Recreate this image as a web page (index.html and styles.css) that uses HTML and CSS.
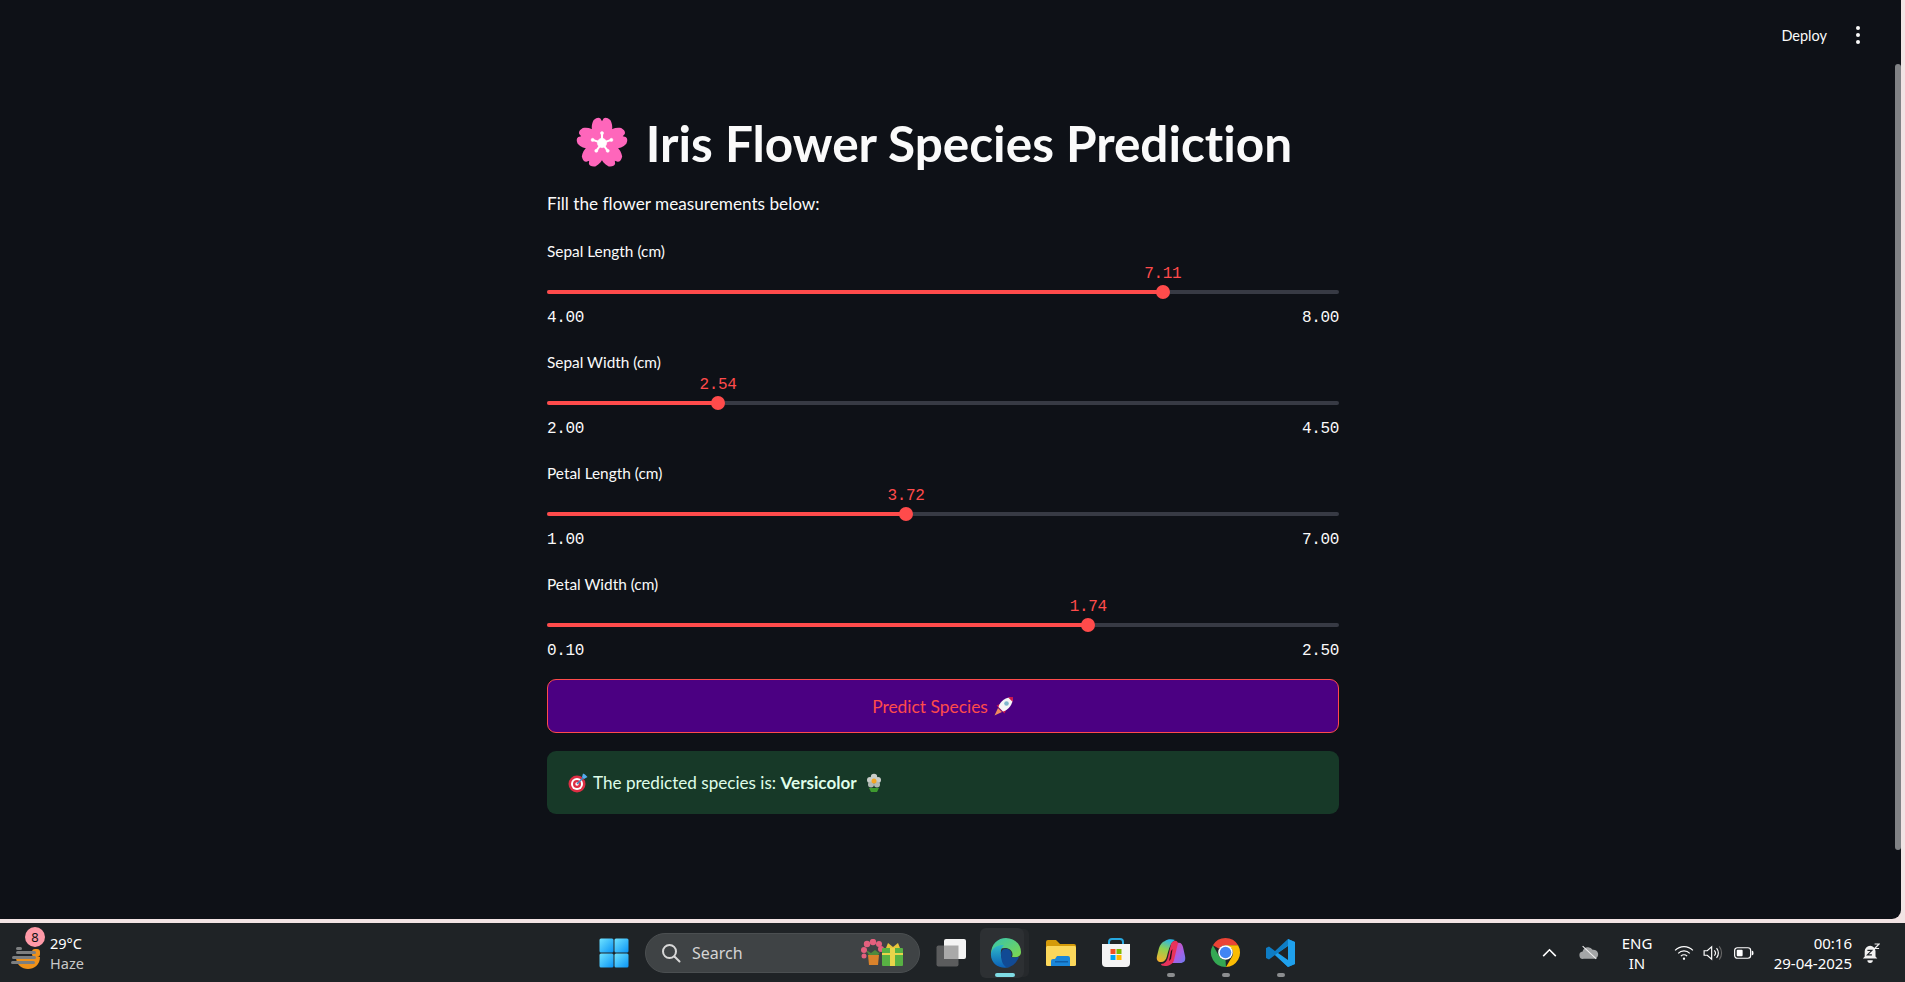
FILE: index.html
```html
<!DOCTYPE html>
<html lang="en">
<head>
    <meta charset="UTF-8">
    <title>Iris Flower Species Prediction</title>
    <meta name="viewport" content="width=device-width, initial-scale=1">
    <link rel="stylesheet" href="styles.css">
</head>
<body>

<svg class="defs" aria-hidden="true">
    <defs>
        <linearGradient id="winBlue" x1="0" y1="0" x2="1" y2="1">
            <stop offset="0" stop-color="#6fe3ff"/>
            <stop offset="1" stop-color="#0a94f5"/>
        </linearGradient>
        <linearGradient id="edgeBlue" x1="0" y1="0" x2="0" y2="1">
            <stop offset="0" stop-color="#2fb9c8"/>
            <stop offset="1" stop-color="#0b5fb8"/>
        </linearGradient>
        <linearGradient id="edgeGreen" x1="0" y1="0" x2="1" y2="1">
            <stop offset="0" stop-color="#35c3b0"/>
            <stop offset="1" stop-color="#7fd84a"/>
        </linearGradient>
        <linearGradient id="copilotA" x1="0.600" y1="0" x2="0.300" y2="1">
            <stop offset="0" stop-color="#2bb6e8"/>
            <stop offset="0.450" stop-color="#8fd04f"/>
            <stop offset="1" stop-color="#f3b02f"/>
        </linearGradient>
        <linearGradient id="copilotB" x1="0" y1="0" x2="1" y2="1">
            <stop offset="0" stop-color="#e8489a"/>
            <stop offset="0.600" stop-color="#a760e6"/>
            <stop offset="1" stop-color="#6a7cf0"/>
        </linearGradient>
        <path id="petal" d="M50 50C33 42 25 22 34 6Q42 -1 47 3L50 8L53 3Q58 -1 66 6C75 22 67 42 50 50Z"/>
    </defs>
</svg>

<div class="window">
    <header class="topbar">
        <span class="deploy">Deploy</span>
        <span class="more"><i></i><i></i><i></i></span>
    </header>

    <main class="content">
        <h1 class="title">
            <svg class="blossom" viewBox="0 0 100 100">
                <g fill="#fe66bb">
                    <use href="#petal"/>
                    <use href="#petal" transform="rotate(72 50 50)"/>
                    <use href="#petal" transform="rotate(144 50 50)"/>
                    <use href="#petal" transform="rotate(216 50 50)"/>
                    <use href="#petal" transform="rotate(288 50 50)"/>
                </g>
                <g fill="#fff" stroke="#fff">
                    <circle cx="50" cy="50" r="9"/>
                    <path d="M50 50V31M50 50L68 44M50 50L61 65M50 50L39 65M50 50L32 44" stroke-width="4"/>
                    <circle cx="50" cy="31" r="3"/>
                    <circle cx="68" cy="44" r="3"/>
                    <circle cx="61" cy="65" r="3"/>
                    <circle cx="39" cy="65" r="3"/>
                    <circle cx="32" cy="44" r="3"/>
                </g>
            </svg>
            <span>Iris Flower Species Prediction</span>
        </h1>

        <p class="intro">Fill the flower measurements below:</p>

        <!-- Sliders -->
        <div class="sliders">
            <div class="slider">
                <label class="slider-label">Sepal Length (cm)</label>
                <div class="slider-body">
                    <span class="slider-value" style="left: 77.75%">7.11</span>
                    <div class="track">
                        <div class="track-fill" style="width: 77.75%"></div>
                        <div class="thumb" style="left: 77.75%"></div>
                    </div>
                </div>
                <div class="slider-range"><span>4.00</span><span>8.00</span></div>
            </div>

            <div class="slider">
                <label class="slider-label">Sepal Width (cm)</label>
                <div class="slider-body">
                    <span class="slider-value" style="left: 21.6%">2.54</span>
                    <div class="track">
                        <div class="track-fill" style="width: 21.6%"></div>
                        <div class="thumb" style="left: 21.6%"></div>
                    </div>
                </div>
                <div class="slider-range"><span>2.00</span><span>4.50</span></div>
            </div>

            <div class="slider">
                <label class="slider-label">Petal Length (cm)</label>
                <div class="slider-body">
                    <span class="slider-value" style="left: 45.33%">3.72</span>
                    <div class="track">
                        <div class="track-fill" style="width: 45.33%"></div>
                        <div class="thumb" style="left: 45.33%"></div>
                    </div>
                </div>
                <div class="slider-range"><span>1.00</span><span>7.00</span></div>
            </div>

            <div class="slider">
                <label class="slider-label">Petal Width (cm)</label>
                <div class="slider-body">
                    <span class="slider-value" style="left: 68.33%">1.74</span>
                    <div class="track">
                        <div class="track-fill" style="width: 68.33%"></div>
                        <div class="thumb" style="left: 68.33%"></div>
                    </div>
                </div>
                <div class="slider-range"><span>0.10</span><span>2.50</span></div>
            </div>
        </div>

        <button class="predict">
            <span>Predict Species</span>
            <svg class="emoji" viewBox="0 0 20 20">
                <path d="M4 12L0.500 19.500L8 16Z" fill="#f08a5d"/>
                <path d="M2.500 9.500L8 7L13 12L10.500 17.500L8 15L5 12Z" fill="#c9164f"/>
                <path d="M4.500 11C6 5 12 1 19 1C19 8 15 14 9 15.500Z" fill="#f6f6f6"/>
                <path d="M14 1.300C16 1 17.500 1 19 1C19 2.500 19 4 18.500 5.800Z" fill="#c9164f"/>
                <circle cx="12.500" cy="7.500" r="2.300" fill="#7fb6cc"/>
            </svg>
        </button>

        <div class="alert">
            <svg class="emoji" viewBox="0 0 20 20">
                <circle cx="9" cy="11" r="8.500" fill="#dd2e44"/>
                <circle cx="9" cy="11" r="6" fill="#fff"/>
                <circle cx="9" cy="11" r="4" fill="#dd2e44"/>
                <circle cx="9" cy="11" r="1.700" fill="#fff"/>
                <path d="M9 11L16 4" stroke="#3b88c3" stroke-width="1.500"/>
                <path d="M14 4L15 0.500L17 1.500L19.500 4L16 6Z" fill="#55acee"/>
            </svg>
            <span>The predicted species is: <b>Versicolor</b></span>
            <svg class="emoji emoji-flower" viewBox="0 0 14 20">
                <path d="M2 15H12L10 19H4Z" fill="#3e9b2f"/>
                <circle cx="7" cy="4" r="3.200" fill="#c9cdc9"/>
                <circle cx="3" cy="7" r="3" fill="#c9cdc9"/>
                <circle cx="11" cy="7" r="3" fill="#c9cdc9"/>
                <circle cx="4" cy="11.500" r="3" fill="#b3b8b3"/>
                <circle cx="10" cy="11.500" r="3" fill="#b3b8b3"/>
                <circle cx="7" cy="8" r="2.500" fill="#f5a623"/>
            </svg>
        </div>
    </main>

    <div class="scrollbar"></div>
</div>

<footer class="taskbar">
    <div class="weather">
        <div class="weather-icon">
            <svg viewBox="0 0 32 32" width="32" height="32">
                <path d="M6 18H30C30 26 24 30 18 30C12 30 6 26 6 18Z" fill="#f0921a"/>
                <rect x="22" y="10" width="8" height="8" rx="3" fill="#f0921a"/>
                <g fill="#7d7f80">
                    <rect x="6" y="8" width="6" height="3" rx="1.500"/>
                    <rect x="6" y="12" width="20" height="3" rx="1.500"/>
                    <rect x="2" y="17" width="24" height="3" rx="1.500"/>
                    <rect x="1" y="22" width="24" height="3" rx="1.500"/>
                </g>
            </svg>
            <span class="weather-badge">8</span>
        </div>
        <div class="weather-text">
            <span>29°C</span>
            <span class="dim">Haze</span>
        </div>
    </div>

    <div class="tb-cell">
        <svg viewBox="0 0 30 30" width="30" height="30">
            <rect x="0.500" y="0.500" width="14" height="14" rx="1.500" fill="url(#winBlue)"/>
            <rect x="15.500" y="0.500" width="14" height="14" rx="1.500" fill="url(#winBlue)"/>
            <rect x="0.500" y="15.500" width="14" height="14" rx="1.500" fill="url(#winBlue)"/>
            <rect x="15.500" y="15.500" width="14" height="14" rx="1.500" fill="url(#winBlue)"/>
        </svg>
    </div>

    <div class="search">
        <svg viewBox="0 0 20 20" width="20" height="20" fill="none" stroke="#d8d8d8" stroke-width="2">
            <circle cx="8.500" cy="8.500" r="6.500"/>
            <path d="M13.500 13.500L18.500 18.500" stroke-linecap="round"/>
        </svg>
        <span class="search-text">Search</span>
        <svg class="search-art" viewBox="0 0 44 28" width="44" height="28">
            <path d="M6 11L11 14L15 11L19 14L22 10L17 18H10Z" fill="#4f8a3c"/>
            <g fill="#e4607e">
                <circle cx="4" cy="11" r="3"/>
                <circle cx="7" cy="5" r="3.200"/>
                <circle cx="13" cy="3" r="3.200"/>
                <circle cx="19" cy="5" r="3"/>
                <circle cx="21" cy="10" r="3"/>
                <circle cx="4" cy="17" r="2.500"/>
            </g>
            <path d="M8 16H19L18 26H9Z" fill="#d9822b"/>
            <rect x="22" y="9" width="21" height="18" rx="1" fill="#58b143"/>
            <rect x="30" y="9" width="5" height="18" fill="#e8d44a"/>
            <rect x="22" y="14" width="21" height="2" fill="#e8d44a"/>
            <path d="M26 9L28 4L33 8L38 4L40 9Z" fill="#e8c53a"/>
        </svg>
    </div>

    <div class="tb-apps">
        <div class="tb-cell">
            <svg viewBox="0 0 30 30" width="30" height="30">
                <rect x="0.500" y="7.500" width="22" height="21" rx="2" fill="#5b5c5d"/>
                <rect x="8" y="1" width="22" height="20" rx="2" fill="#f4f4f4"/>
                <rect x="8" y="7.500" width="14.500" height="13.500" fill="#a9a9a9"/>
            </svg>
        </div>
        <div class="tb-cell tb-active">
            <svg viewBox="0 0 32 32" width="32" height="32">
                <path d="M1 17C1 7 8 1 16 1C24 1 31 7 31 15C31 20 26 21 22 20C24 15 20 11 15 11C8 11 4 16 1 17Z" fill="url(#edgeGreen)"/>
                <path d="M1 16C3 9 9 8 14 8C9 12 9 24 20 30C10 33 0 27 1 16Z" fill="url(#edgeBlue)"/>
                <path d="M11 17C11 12 15 11 18 12C22 14 22 18 21 20C25 21 27 20 29 20C26 27 21 31 16 30C12 27 11 22 11 17Z" fill="#114a94"/>
            </svg>
        </div>
        <div class="tb-cell">
            <svg viewBox="0 0 30 28" width="30" height="28">
                <path d="M0 3Q0 1 2 1H10L14 5H28Q30 5 30 7V9H0Z" fill="#d49a0a"/>
                <rect x="0" y="7" width="30" height="20" rx="1.500" fill="#fbd75b"/>
                <path d="M5 27V22Q5 20 7 20H9L11 17H22Q24 17 24 19V27Z" fill="#1a86d9"/>
                <rect x="9" y="22" width="13" height="1.500" fill="#0f5ea8"/>
            </svg>
        </div>
        <div class="tb-cell">
            <svg viewBox="0 0 30 30" width="30" height="30">
                <path d="M8 7V4Q8 1 11 1H19Q22 1 22 4V7" fill="none" stroke="#27a8e0" stroke-width="2"/>
                <path d="M1 6H29V25Q29 29 25 29H5Q1 29 1 25Z" fill="#f4f4f4"/>
                <rect x="9.500" y="11" width="5" height="5" fill="#f25022"/>
                <rect x="15.500" y="11" width="5" height="5" fill="#7fba00"/>
                <rect x="9.500" y="17" width="5" height="5" fill="#00a4ef"/>
                <rect x="15.500" y="17" width="5" height="5" fill="#ffb900"/>
            </svg>
        </div>
        <div class="tb-cell">
            <svg viewBox="0 0 30 28" width="30" height="28">
                <path d="M21 4C25 3 26 5 27 8L29 17C30 22 28 24 24 24H14C18 19 19 10 21 4Z" fill="url(#copilotB)"/>
                <path d="M9 2C11 0 16 0 19 1C15 3 13 9 11 17C10 21 8 23 5 23C2 23 0 21 1 17L3 9C4 6 6 3 9 2Z" fill="url(#copilotA)"/>
                <path d="M15 5C17 1 21 1 22 4L18 21C17 25 13 27 9 27C6 27 5 26 5 25C9 25 11 22 12 18Z" fill="#e8335a"/>
                <path d="M15 12L16.500 10L15 20L13 22Z" fill="#2a0c12"/>
            </svg>
        </div>
        <div class="tb-cell">
            <svg viewBox="0 0 32 32" width="31" height="31">
                <path d="M16 1A15 15 0 0 1 29 8.500H16A7.500 7.500 0 0 0 9.500 12.250L3 8.500A15 15 0 0 1 16 1Z" fill="#ea4335"/>
                <path d="M29 8.500A15 15 0 0 1 16.500 31L23 19.750A7.500 7.500 0 0 0 22.500 12.250L16 8.500Z" fill="#fbbc04"/>
                <path d="M3 8.500L9.500 19.750A7.500 7.500 0 0 0 16 23.500L16.500 31A15 15 0 0 1 3 8.500Z" fill="#34a853"/>
                <circle cx="16" cy="16" r="7.500" fill="#fff"/>
                <circle cx="16" cy="16" r="6" fill="#4285f4"/>
            </svg>
        </div>
        <div class="tb-cell">
            <svg viewBox="0 0 30 30" width="30" height="30">
                <path d="M22 1L29 4V26L22 29L9 17L3 21.500L0 20V10L3 8.500L9 13Z" fill="#0e7cc4"/>
                <path d="M22 1L29 4V26L22 29L9 17L22 7.500Z" fill="#1fa0ec"/>
                <path d="M22 8L12 15L22 22Z" fill="#1f2326"/>
            </svg>
        </div>
    </div>

    <div class="tray">
        <div class="tray-chevron">
            <svg viewBox="0 0 16 10" width="15" height="9" fill="none" stroke="#fff" stroke-width="1.800">
                <path d="M1 9L8 2L15 9"/>
            </svg>
        </div>
        <div class="tray-cloud">
            <svg viewBox="0 0 22 16" width="20" height="15">
                <path d="M5 15A4 4 0 0 1 4 7A6 6 0 0 1 15 5A5 5 0 0 1 17 15Z" fill="#a4a6a7"/>
                <path d="M4 1L19 15" stroke="#f0f0f0" stroke-width="1.200"/>
            </svg>
        </div>
        <div class="tray-lang"><span>ENG</span><span>IN</span></div>
        <div class="tray-wifi">
            <svg viewBox="0 0 22 18" width="20" height="16" fill="none" stroke="#fff" stroke-width="1.400">
                <path d="M1 6A14 14 0 0 1 21 6"/>
                <path d="M4.500 9.500A9 9 0 0 1 17.500 9.500"/>
                <path d="M7.500 12.500A5 5 0 0 1 14.500 12.500"/>
                <circle cx="11" cy="15.500" r="1.300" fill="#fff" stroke="none"/>
            </svg>
        </div>
        <div class="tray-volume">
            <svg viewBox="0 0 22 18" width="20" height="16" fill="none" stroke="#fff" stroke-width="1.300">
                <path d="M1 6.500H4.500L9.500 2V16L4.500 11.500H1Z"/>
                <path d="M12.500 6A4.500 4.500 0 0 1 12.500 12"/>
                <path d="M15 3.500A8.500 8.500 0 0 1 15 14.500"/>
                <path d="M18 1.500A12 12 0 0 1 18 16.500" stroke="#666"/>
            </svg>
        </div>
        <div class="tray-battery">
            <svg viewBox="0 0 22 13" width="20" height="12">
                <rect x="0.700" y="0.700" width="17.600" height="11.600" rx="3" fill="none" stroke="#fff" stroke-width="1.300"/>
                <rect x="3" y="3" width="6.500" height="7" rx="1" fill="#fff"/>
                <path d="M19.500 4H20Q21.500 4 21.500 6.500Q21.500 9 20 9H19.500Z" fill="#fff"/>
            </svg>
        </div>
        <div class="tray-clock"><span>00:16</span><span>29-04-2025</span></div>
        <div class="tray-bell">
            <svg viewBox="0 0 20 22" width="18" height="20">
                <path d="M9 3A6 6 0 0 1 15 9V15L17 17H1L3 15V9A6 6 0 0 1 9 3Z" fill="#f2f2f2"/>
                <path d="M6 19H12A3 3 0 0 1 6 19Z" fill="#f2f2f2"/>
                <path d="M6 8H11L6 13H11" fill="none" stroke="#202428" stroke-width="1.300"/>
                <path d="M14 1H19L14 6H19" fill="none" stroke="#f2f2f2" stroke-width="1.300"/>
            </svg>
        </div>
    </div>
</footer>

</body>
</html>
```

FILE: styles.css
```css
/* Reset CSS */
* {
    box-sizing: border-box;
    margin: 0;
    padding: 0;
}

body {
    font-family: Lato, 'Noto Sans', sans-serif;
    font-variant-ligatures: none;
    background: #f2e4e4;
    color: #fafafa;
    display: flex;
    flex-direction: column;
    height: 100vh;
    overflow: hidden;
}

.defs {
    width: 0;
    height: 0;
    display: block;
}

/* App window */
.window {
    position: relative;
    flex: none;
    height: 919px;
    margin-right: 4px;
    padding-right: 15px;
    background: #0e1117;
    border-bottom-right-radius: 9px;
}

.topbar {
    display: flex;
    justify-content: flex-end;
    align-items: center;
    height: 70px;
    color: #fafafa;
}

.deploy {
    font-size: 14.500px;
    margin-right: 29px;
}

.more {
    display: flex;
    flex-direction: column;
    gap: 3px;
    margin-right: 26px;
}

.more i {
    display: block;
    width: 4px;
    height: 4px;
    border-radius: 50%;
    background: #fafafa;
}

.scrollbar {
    position: absolute;
    top: 64px;
    right: 0;
    width: 6px;
    height: 786px;
    background: #808285;
    border-radius: 3px;
}

.content {
    width: 792px;
    margin: 0 auto;
}

.title {
    display: flex;
    align-items: center;
    justify-content: center;
    gap: 18px;
    height: 66px;
    margin-top: 40px;
    padding-right: 18px;
    font-size: 49.500px;
    font-weight: 700;
    color: #fafafa;
}

.blossom {
    width: 52px;
    height: 52px;
    flex: none;
}

.intro {
    font-size: 17.200px;
    line-height: 26px;
    margin-top: 15px;
    margin-bottom: 23px;
}

/* Sliders */
.sliders {
    display: flex;
    flex-direction: column;
    gap: 23px;
}

.slider-label {
    display: block;
    font-size: 15.400px;
    line-height: 22px;
}

.slider-body {
    position: relative;
    height: 40px;
}

.slider-value {
    position: absolute;
    top: 2px;
    transform: translateX(-50%);
    font-family: 'Liberation Mono', monospace;
    font-size: 16px;
    letter-spacing: -0.360px;
    line-height: 20px;
    color: #ff4b4b;
}

.track {
    position: absolute;
    left: 0;
    right: 0;
    top: 28px;
    height: 4px;
    border-radius: 2px;
    background: #373a44;
}

.track-fill {
    height: 100%;
    border-radius: 2px;
    background: #ff4b4b;
}

.thumb {
    position: absolute;
    top: -5px;
    width: 14px;
    height: 14px;
    margin-left: -7px;
    border-radius: 50%;
    background: #ff4b4b;
}

.slider-range {
    display: flex;
    justify-content: space-between;
    margin-top: 6px;
    font-family: 'Liberation Mono', monospace;
    font-size: 16px;
    letter-spacing: -0.360px;
    line-height: 20px;
    color: #fafafa;
}

.predict {
    display: flex;
    align-items: center;
    justify-content: center;
    gap: 6px;
    width: 100%;
    height: 54px;
    margin-top: 18px;
    background-color: #4b0082;
    color: #ff4b4b;
    border: 1px solid #ff4b4b;
    border-radius: 9px;
    font-family: inherit;
    font-size: 17.400px;
}

.emoji {
    width: 20px;
    height: 20px;
    flex: none;
}

.emoji-flower {
    width: 14px;
}

.alert {
    display: flex;
    align-items: center;
    gap: 5px;
    height: 63px;
    margin-top: 18px;
    padding-left: 21px;
    background: #173928;
    color: #dffde9;
    border-radius: 9px;
    font-size: 17.100px;
}

.alert .emoji-flower {
    margin-left: 5px;
}

/* Taskbar */
.taskbar {
    flex: 1;
    display: flex;
    align-items: center;
    margin-top: 4px;
    background: #1f2326;
    font-family: 'Noto Sans', sans-serif;
    font-size: 15px;
    color: #fff;
}

.weather {
    display: flex;
    align-items: center;
    width: 586px;
    padding-left: 10px;
    font-size: 14.500px;
}

.weather-icon {
    position: relative;
    width: 40px;
    height: 36px;
    padding-top: 4px;
}

.weather-badge {
    position: absolute;
    left: 15px;
    top: -8px;
    width: 20px;
    height: 20px;
    border-radius: 50%;
    background: #ff9aa8;
    color: #111;
    font-size: 13px;
    line-height: 20px;
    text-align: center;
}

.weather-text {
    display: flex;
    flex-direction: column;
    line-height: 20px;
}

.dim {
    color: #c9c9c9;
}

.tb-cell {
    position: relative;
    display: flex;
    align-items: center;
    justify-content: center;
    width: 55px;
    height: 59px;
}

.tb-cell svg {
    position: relative;
}

.tb-apps {
    display: flex;
    margin-left: 3px;
}

.tb-apps .tb-cell:nth-child(n+5)::after {
    content: "";
    position: absolute;
    left: 24px;
    bottom: 5px;
    width: 8px;
    height: 4px;
    border-radius: 2px;
    background: #8b8d8f;
}

.tb-active::before {
    content: "";
    position: absolute;
    left: 2px;
    top: 5px;
    width: 44px;
    height: 50px;
    border-radius: 6px;
    background: #2d3033;
    box-shadow: 6px 0 0 -1px #26292c;
}

.tb-active::after {
    content: "";
    position: absolute;
    left: 17px;
    bottom: 5px;
    width: 20px;
    height: 4px;
    border-radius: 2px;
    background: #7fdbe4;
}

.search {
    display: flex;
    align-items: center;
    width: 275px;
    height: 40px;
    margin-left: 4px;
    padding: 0 15px;
    background: #3f4345;
    border: 1px solid #4b4f51;
    border-radius: 20px;
}

.search-text {
    margin-left: 11px;
    font-size: 16px;
    color: #d4d4d4;
}

.search-art {
    margin-left: auto;
}

.tray {
    display: flex;
    align-items: center;
    margin-left: auto;
    padding-right: 15px;
}

.tray > div {
    display: flex;
    flex: none;
    align-items: center;
    justify-content: center;
}

.tray-chevron {
    width: 34px;
}

.tray-cloud {
    width: 46px;
}

.tray-lang {
    flex-direction: column;
    width: 50px;
    line-height: 20px;
}

.tray-wifi {
    width: 44px;
}

.tray-volume {
    width: 14px;
}

.tray-volume svg {
    flex: none;
}

.tray-battery {
    width: 48px;
}

.tray-clock {
    flex-direction: column;
    align-items: flex-end !important;
    width: 84px;
    line-height: 20px;
}

.tray-bell {
    width: 38px;
}
```
